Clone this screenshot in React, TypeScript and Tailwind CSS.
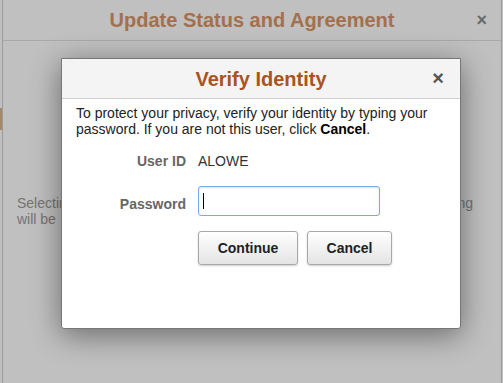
const App = () => {
    return (
        <div className="relative w-[503px] h-[383px] overflow-hidden bg-[#bfc0bf] font-['Liberation_Sans',Arial,sans-serif]">
            {/* page behind the overlay */}
            <div className="absolute left-0 top-[108px] w-[2px] h-[22px] bg-[#a08a6a]" />
            <div className="ml-[2px] mr-[1px] h-full border-l border-r border-[#9c9c9c] flex flex-col">
                <div className="relative h-[41px] border-b border-[#a9a9a9] flex items-center justify-center">
                    <h1 className="text-[20px] font-bold text-[#a3704e] leading-none">Update Status and Agreement</h1>
                    <span className="absolute right-[14px] top-[11px] text-[18px] font-bold text-[#6a6a6a] leading-none">×</span>
                </div>
                <div className="flex justify-between pt-[154px] pl-[14px] pr-[28px] text-[14px] leading-[16px] text-[#747474]">
                    <p>
                        Selecting
                        <br />
                        will be
                    </p>
                    <p>ng</p>
                </div>
            </div>

            {/* Verify Identity modal */}
            <div className="absolute left-[61px] top-[58px] w-[400px] h-[271px] bg-white border border-[#777] rounded-b-[3px] shadow-[0_6px_30px_rgba(0,0,0,0.45)] flex flex-col">
                <div className="relative h-[40px] bg-[#f4f4f4] border-b border-[#cfcfcf] flex items-center justify-center">
                    <h2 className="text-[20px] font-bold text-[#a9541e] leading-none">Verify Identity</h2>
                    <span className="absolute right-[16px] top-[9px] text-[20px] font-bold text-[#555] leading-none">×</span>
                </div>
                <p className="px-[14px] pt-[6px] text-[14px] leading-[16px] text-[#222]">
                    To protect your privacy, verify your identity by typing your password. If you are not this user, click <b className="text-black">Cancel</b>.
                </p>
                <div className="grid grid-cols-[110px_1fr] gap-x-[12px] pl-[14px] pt-[14px] items-center text-[14px]">
                    <span className="text-right font-bold text-[#666]">User ID</span>
                    <span className="text-[#333]">ALOWE</span>
                    <span className="mt-[20px] text-right font-bold text-[#666]">Password</span>
                    <div className="mt-[14px] w-[182px] h-[30px] border border-[#7aa8ec] rounded-[3px] shadow-[inset_0_1px_2px_rgba(0,0,0,0.12)] flex items-center pl-[4px]">
                        <div className="w-px h-[16px] bg-black" />
                    </div>
                    <div />
                    <div className="mt-[15px] flex gap-[9px]">
                        <button className="w-[100px] h-[34px] border border-[#a8a8a8] rounded-[3px] bg-gradient-to-b from-white to-[#e4e4e4] shadow-[0_1px_2px_rgba(0,0,0,0.2)] text-[14px] font-bold text-[#222]">
                            Continue
                        </button>
                        <button className="w-[85px] h-[34px] border border-[#a8a8a8] rounded-[3px] bg-gradient-to-b from-white to-[#e4e4e4] shadow-[0_1px_2px_rgba(0,0,0,0.2)] text-[14px] font-bold text-[#222]">
                            Cancel
                        </button>
                    </div>
                </div>
            </div>
        </div>
    );
};

export default App;
